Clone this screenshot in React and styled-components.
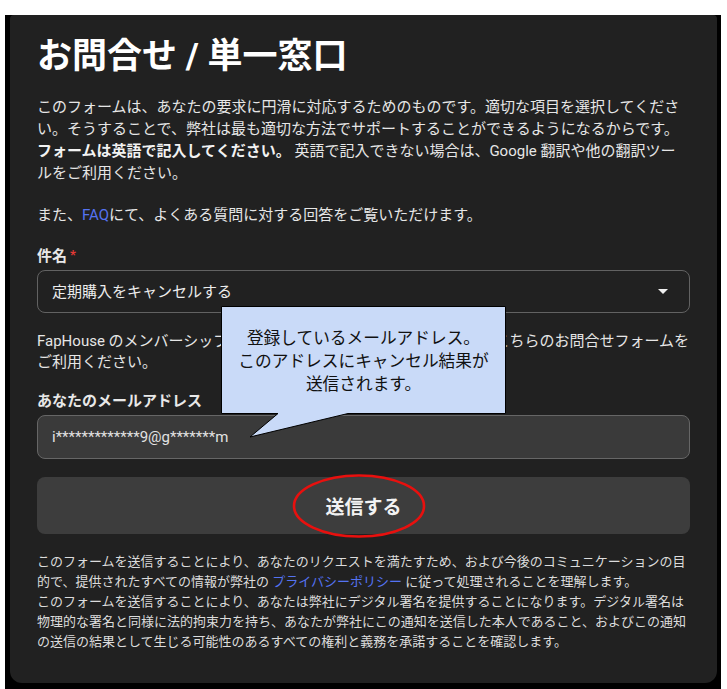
import React from "react";
import styled, { createGlobalStyle } from "styled-components";

const GlobalStyle = createGlobalStyle`
  html, body {
    margin: 0;
    padding: 0;
    background: #ffffff;
  }
  body {
    font-family: Roboto, "Noto Sans CJK JP", sans-serif;
  }
`;

// black frame around the cropped card
const Frame = styled.div`
  margin: 15px 0 0 5px;
  width: 716px;
  padding: 0 4px 7px 5px;
  box-sizing: border-box;
  background: #000;
`;

const Card = styled.section`
  position: relative;
  background: #212121;
  border-radius: 4px 4px 12px 12px;
  padding: 22px 27px 31px 27px;
  color: #e6e6e6;
  font-size: 15px;
  line-height: 22px;
`;

const Title = styled.h1`
  margin: 0;
  font-size: 35px;
  line-height: 40px;
  font-weight: 700;
  color: #fff;
`;

const Text = styled.p`
  margin: ${(p) => p.$top || 0}px 0 0 0;
  font-size: ${(p) => p.$size || 15}px;
  line-height: ${(p) => p.$lh || 22}px;
  color: ${(p) => p.$color || "#e6e6e6"};
`;

const Link = styled.a`
  color: #5573f2;
  text-decoration: none;
`;

const Label = styled.div`
  margin-top: ${(p) => p.$top}px;
  font-size: 15px;
  line-height: 22px;
  font-weight: 700;
  color: #e8e8e8;
`;

const Required = styled.span`
  color: #e53935;
  margin-left: 3px;
  font-size: 13px;
  vertical-align: 2px;
`;

const SelectBox = styled.div`
  margin-top: 3px;
  height: 43px;
  box-sizing: border-box;
  border: 1px solid #626262;
  border-radius: 8px;
  display: flex;
  align-items: center;
  justify-content: space-between;
  padding: 0 21px 0 14px;
  font-size: 15px;
  color: #ececec;
`;

const Caret = styled.span`
  width: 0;
  height: 0;
  border-left: 5px solid transparent;
  border-right: 5px solid transparent;
  border-top: 5px solid #f0f0f0;
`;

const EmailInput = styled.input`
  display: block;
  margin-top: 3px;
  width: 100%;
  height: 44px;
  box-sizing: border-box;
  border: 1px solid #666;
  border-radius: 8px;
  background: #3a3a3a;
  padding: 0 14px;
  font-family: Roboto, sans-serif;
  font-size: 15px;
  color: #e2e2e2;
  outline: none;
`;

const SubmitButton = styled.button`
  position: relative;
  display: block;
  margin-top: 18px;
  width: 100%;
  height: 57px;
  border: none;
  border-radius: 8px;
  background: #3d3d3d;
  color: #f2f2f2;
  font-family: Roboto, "Noto Sans CJK JP", sans-serif;
  font-size: 19px;
  font-weight: 700;
  cursor: pointer;
`;

// red hand-drawn ring over the button label
const Ring = styled.svg`
  position: absolute;
  left: 50%;
  top: 50%;
  width: 136px;
  height: 66px;
  margin: -33px 0 0 -73px;
  pointer-events: none;
`;

// speech bubble annotation over the form
const Bubble = styled.div`
  position: absolute;
  left: 211px;
  top: 291px;
  width: 285px;
  height: 132px;
`;

const BubbleShape = styled.svg`
  position: absolute;
  left: 0;
  top: 0;
  overflow: visible;
`;

const BubbleText = styled.div`
  position: relative;
  height: 107px;
  display: flex;
  align-items: center;
  justify-content: center;
  text-align: center;
  font-family: "Noto Sans CJK JP", sans-serif;
  font-size: 16.7px;
  line-height: 23px;
  color: #111;
  padding-top: 2px;
  box-sizing: border-box;
`;

const Bold = styled.strong`
  font-weight: 700;
  color: #f2f2f2;
`;

export default function App() {
  return (
    <>
      <GlobalStyle />
      <Frame>
        <Card>
          <Title>お問合せ / 単一窓口</Title>
          <Text $top={19}>
            このフォームは、あなたの要求に円滑に対応するためのものです。適切な項目を選択してください。そうすることで、弊社は最も適切な方法でサポートすることができるようになるからです。
            <Bold>フォームは英語で記入してください。</Bold>{" "}
            英語で記入できない場合は、Google 翻訳や他の翻訳ツールをご利用ください。
          </Text>
          <Text $top={20}>
            また、<Link href="#">FAQ</Link>にて、よくある質問に対する回答をご覧いただけます。
          </Text>

          <Label $top={18}>
            件名<Required>*</Required>
          </Label>
          <SelectBox>
            <span>定期購入をキャンセルする</span>
            <Caret />
          </SelectBox>

          <Text $top={18} $lh={21}>
            FapHouse のメンバーシップの解約以外に関する&nbsp;&nbsp;&nbsp;お問い合わせは、こちらのお問合せフォームをご利用ください。
          </Text>

          <Label $top={17}>あなたのメールアドレス</Label>
          <EmailInput readOnly defaultValue="i*************9@g*******m" />

          <SubmitButton type="button">
            送信する
            <Ring viewBox="0 0 136 66">
              <ellipse cx="68" cy="33" rx="65" ry="30.5" fill="none" stroke="#e8100e" strokeWidth="2.6" />
            </Ring>
          </SubmitButton>

          <Text $top={18} $size={13} $lh={20} $color="#dcdcdc">
            このフォームを送信することにより、あなたのリクエストを満たすため、および今後のコミュニケーションの目的で、提供されたすべての情報が弊社の{" "}
            <Link href="#">プライバシーポリシー</Link> に従って処理されることを理解します。
            <br />
            このフォームを送信することにより、あなたは弊社にデジタル署名を提供することになります。デジタル署名は物理的な署名と同様に法的拘束力を持ち、あなたが弊社にこの通知を送信した本人であること、およびこの通知の送信の結果として生じる可能性のあるすべての権利と義務を承諾することを確認します。
          </Text>

          <Bubble>
            <BubbleShape width="285" height="132" viewBox="0 0 285 132">
              <polygon
                points="0.5,0.5 284.5,0.5 284.5,107.5 127,107.5 29,131 57,107.5 0.5,107.5"
                fill="#c9daf8"
                stroke="#000"
                strokeWidth="1"
              />
            </BubbleShape>
            <BubbleText>
              登録しているメールアドレス。
              <br />
              このアドレスにキャンセル結果が
              <br />
              送信されます。
            </BubbleText>
          </Bubble>
        </Card>
      </Frame>
    </>
  );
}
